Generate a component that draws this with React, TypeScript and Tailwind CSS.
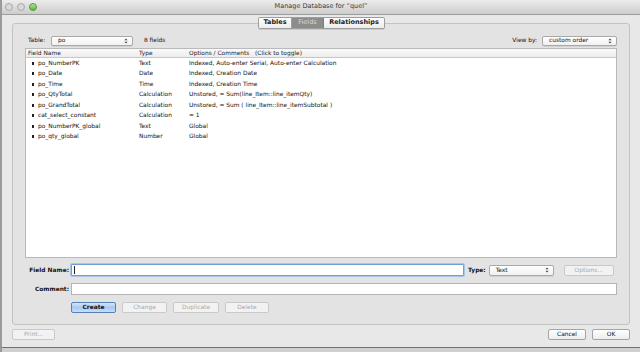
import React from "react";

const FIELDS: [string, string, string][] = [
  ["po_NumberPK", "Text", "Indexed, Auto-enter Serial, Auto-enter Calculation"],
  ["po_Date", "Date", "Indexed, Creation Date"],
  ["po_Time", "Time", "Indexed, Creation Time"],
  ["po_QtyTotal", "Calculation", "Unstored, = Sum(line_Item::line_itemQty)"],
  ["po_GrandTotal", "Calculation", "Unstored, = Sum ( line_Item::line_itemSubtotal )"],
  ["cat_select_constant", "Calculation", "= 1"],
  ["po_NumberPK_global", "Text", "Global"],
  ["po_qty_global", "Number", "Global"],
];

function Arrows() {
  return (
    <svg width="4" height="6" viewBox="0 0 4 6" className="shrink-0">
      <path d="M0.5 2.3 L2 0.6 L3.5 2.3 Z" fill="#444" />
      <path d="M0.5 3.7 L2 5.4 L3.5 3.7 Z" fill="#444" />
    </svg>
  );
}

function Select({ value, className }: { value: string; className: string }) {
  return (
    <div
      className={`flex items-center justify-between rounded-[2px] border border-[#a9a9a9] bg-gradient-to-b from-white to-[#f1f1f1] pl-[6px] pr-[4px] text-[#111] shadow-[0_1px_0_rgba(0,0,0,0.08)] ${className}`}
    >
      <span>{value}</span>
      <Arrows />
    </div>
  );
}

function Btn({ label, kind, className }: { label: string; kind?: "primary" | "disabled"; className: string }) {
  const style =
    kind === "primary"
      ? "border-[#5a7fb6] bg-gradient-to-b from-[#d5e6fb] via-[#a7c9f2] to-[#c9defa] text-[#111]"
      : kind === "disabled"
        ? "border-[#c9c9c9] bg-[#f2f2f2] text-[#a8a8a8]"
        : "border-[#a4a4a4] bg-gradient-to-b from-white to-[#ededed] text-[#111]";
  return (
    <div className={`flex items-center justify-center rounded-[2px] border ${style} ${className}`}>{label}</div>
  );
}

export default function App() {
  return (
    <div className="flex h-[352px] w-[640px] flex-col overflow-hidden border-l-[2px] border-[#9a9a9a] bg-[#e8e8e8] font-['DejaVu_Sans',sans-serif] text-[5.9px] text-[#111]">
      {/* title bar */}
      <div className="relative flex h-[15px] shrink-0 items-center justify-center border-b border-[#9c9c9c] bg-gradient-to-b from-[#ececec] to-[#cdcdcd]">
        <div className="absolute left-[3px] top-[3px] flex gap-[4px]">
          <span className="h-[8px] w-[8px] rounded-full border border-[#a9a9a9] bg-[#d8d8d8]" />
          <span className="h-[8px] w-[8px] rounded-full border border-[#a9a9a9] bg-[#d8d8d8]" />
          <span className="h-[8px] w-[8px] rounded-full border border-[#4f9a32] bg-gradient-to-b from-[#b5e39a] to-[#5cb23a]" />
        </div>
        <span className="text-[6.5px] text-[#3a3a3a]">Manage Database for “quel”</span>
      </div>

      {/* body */}
      <div className="flex flex-1 flex-col px-[10px] pt-[1px]">
        <div className="relative mt-[7px] flex h-[302px] flex-col rounded-[3px] border border-[#c3c3c3] bg-[#e3e3e3] px-[12px] pt-[11px]">
          {/* tabs */}
          <div className="absolute left-[245px] top-[-7px] flex h-[12px] overflow-hidden rounded-[2px] border border-[#9d9d9d] text-[6.5px] font-bold shadow-[0_1px_0_rgba(0,0,0,0.1)]">
            <div className="flex w-[33px] items-center justify-center border-r border-[#9d9d9d] bg-gradient-to-b from-white to-[#ececec] text-[#222]">Tables</div>
            <div className="flex w-[32px] items-center justify-center border-r border-[#7d7d7d] bg-[#8c8c8c] font-normal text-[#d9d9d9]">Fields</div>
            <div className="flex w-[60px] items-center justify-center bg-gradient-to-b from-white to-[#ececec] text-[#222]">Relationships</div>
          </div>

          {/* table row */}
          <div className="flex h-[11px] items-center">
            <span className="w-[26px] pl-[3px]">Table:</span>
            <Select value="po" className="h-[10px] w-[82px]" />
            <span className="ml-[11px]">8 fields</span>
            <span className="ml-auto mr-[5px]">View by:</span>
            <Select value="custom order" className="h-[10px] w-[75px]" />
          </div>

          {/* list */}
          <div className="mt-[2px] flex h-[210px] flex-col border border-[#b9b9b9] bg-white">
            <div className="flex h-[9px] shrink-0 items-center border-b border-[#c8c8c8] bg-gradient-to-b from-[#fafafa] to-[#ececec] text-[#222]">
              <span className="w-[113px] pl-[2px]">Field Name</span>
              <span className="w-[50px]">Type</span>
              <span>Options / Comments&nbsp;&nbsp;&nbsp;(Click to toggle)</span>
            </div>
            {FIELDS.map(([name, type, opts]) => (
              <div key={name} className="flex h-[10.5px] shrink-0 items-center">
                <span className="flex w-[113px] items-center pl-[6px]">
                  <span className="mr-[4px] h-[3px] w-[2px] bg-[#222]" />
                  {name}
                </span>
                <span className="w-[50px]">{type}</span>
                <span>{opts}</span>
              </div>
            ))}
          </div>

          {/* form */}
          <div className="mt-[6px] flex h-[12px] items-center">
            <span className="w-[44px] text-right font-bold">Field Name:</span>
            <div className="ml-[2px] flex h-[12px] w-[393px] items-center rounded-[1px] border border-[#6f9fd6] bg-white shadow-[0_0_0_1px_#a9c6ea]">
              <span className="ml-[2px] h-[8px] w-[1px] bg-[#222]" />
            </div>
            <span className="ml-[4px] font-bold">Type:</span>
            <Select value="Text" className="ml-[3px] h-[11px] w-[65px]" />
            <Btn label="Options..." kind="disabled" className="ml-[10px] h-[11px] w-[50px]" />
          </div>
          <div className="mt-[7px] flex h-[12px] items-center">
            <span className="w-[44px] text-right font-bold">Comment:</span>
            <div className="ml-[2px] h-[12px] flex-1 border border-[#b4b4b4] bg-white" />
          </div>
          <div className="mt-[7px] flex h-[11px] gap-[6px] pl-[46px]">
            <Btn label="Create" kind="primary" className="w-[45px] font-bold" />
            <Btn label="Change" kind="disabled" className="w-[45px]" />
            <Btn label="Duplicate" kind="disabled" className="w-[46px]" />
            <Btn label="Delete" kind="disabled" className="w-[44px]" />
          </div>
        </div>

        {/* bottom buttons */}
        <div className="mt-[4px] flex h-[11px] items-center">
          <Btn label="Print..." kind="disabled" className="h-[11px] w-[43px]" />
          <Btn label="Cancel" className="ml-auto h-[11px] w-[38px]" />
          <Btn label="OK" className="ml-[6px] h-[11px] w-[38px]" />
        </div>
      </div>
      <div className="h-[5px] shrink-0 border-t border-[#707070] bg-[#d0d0d0]" />
    </div>
  );
}
